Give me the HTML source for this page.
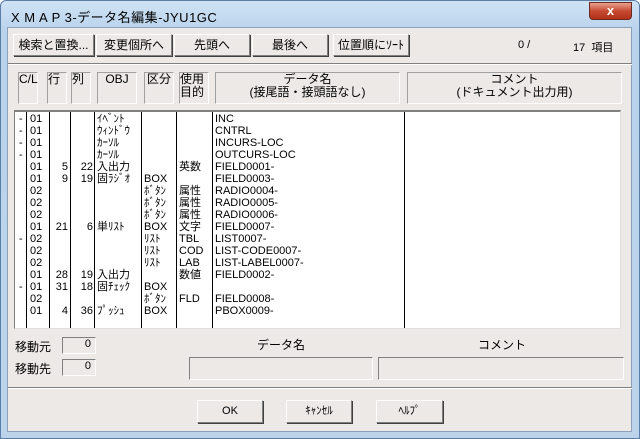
<!DOCTYPE html>
<html><head><meta charset="utf-8"><style>
*{margin:0;padding:0;box-sizing:border-box}
body{width:640px;height:439px;overflow:hidden;background:#fff;font-family:"Liberation Sans","Noto Sans CJK JP","WenQuanYi Zen Hei",sans-serif;font-size:12px;color:#000;position:relative}
.a{position:absolute;white-space:nowrap}
#win{position:absolute;left:0;top:0;width:640px;height:439px;background:linear-gradient(#cfe3f4,#b9d3ec 30px,#bcd4ea);border:1px solid #5a7ea8;border-radius:6px 6px 0 0}
#client{position:absolute;left:7px;top:27px;width:625px;height:405px;background:#ece9e6;border:1px solid #8aa0bb}
.btn{position:absolute;height:22px;background:#ece9e6;border:1px solid;border-color:#fff #808080 #808080 #fff;box-shadow:1px 1px 0 #404040;text-align:center;line-height:20px;font-size:12px}
.hdr{position:absolute;top:72px;height:32px;border:1px solid;border-color:#a0a0a0 #fff #fff #a0a0a0;text-align:center;line-height:13px;font-size:12px}
.sunk{position:absolute;border:1px solid;border-color:#808080 #fff #fff #808080;background:#ece9e6}
.row{position:absolute;left:0;height:12px;font-size:11px;line-height:12px;font-family:"Liberation Sans Narrow","Liberation Sans","Noto Sans CJK JP",sans-serif}
.row span{position:absolute}
.vl{position:absolute;top:0;width:1px;height:216px;background:#000}
</style></head><body>
<div id="win">
<div class="a" style="left:10px;top:6px;font-size:13px;letter-spacing:0.5px">X M A P 3-データ名編集-JYU1GC</div>
<div class="a" style="left:588px;top:1px;width:43px;height:18px;background:linear-gradient(#e8a090,#c84a32 50%,#b03018);border:1px solid #6a2a20;border-radius:0 0 4px 4px;color:#fff;text-align:center;font-weight:bold;line-height:16px;font-size:13px">x</div>
</div>
<div id="client"></div>
<div class="btn" style="left:13px;top:34px;width:81px">検索と置換...</div>
<div class="btn" style="left:96px;top:34px;width:76px">変更個所へ</div>
<div class="btn" style="left:174px;top:34px;width:76px">先頭へ</div>
<div class="btn" style="left:252px;top:34px;width:76px">最後へ</div>
<div class="btn" style="left:333px;top:34px;width:76px">位置順にｿｰﾄ</div>
<div class="a" style="left:518px;top:39px;font-size:11px">0 /</div>
<div class="a" style="left:573px;top:39px;font-size:11px">17 &nbsp;項目</div>
<div class="a" style="left:8px;top:63px;width:624px;height:2px;border-top:1px solid #808080;border-bottom:1px solid #fff"></div>
<div class="hdr" style="left:18px;width:20px;text-align:left">C/L</div>
<div class="hdr" style="left:47px;width:20px;text-align:left">行</div>
<div class="hdr" style="left:71px;width:20px;text-align:left">列</div>
<div class="hdr" style="left:97px;width:40px">OBJ</div>
<div class="hdr" style="left:144px;width:30px">区分</div>
<div class="hdr" style="left:179px;width:30px;text-align:left">使用<br>目的</div>
<div class="hdr" style="left:215px;width:185px">データ名<br>(接尾語・接頭語なし)</div>
<div class="hdr" style="left:407px;width:215px">コメント<br>(ドキュメント出力用)</div>
<div class="a" style="left:14px;top:110px;width:607px;height:219px;background:#fff;border:1px solid;border-color:#808080 #e0e0e0 #e0e0e0 #808080;border-top:2px solid #808080">
<div class="vl" style="left:11px"></div><div class="vl" style="left:34px"></div><div class="vl" style="left:55px"></div><div class="vl" style="left:79px"></div><div class="vl" style="left:126px"></div><div class="vl" style="left:161px"></div><div class="vl" style="left:197px"></div><div class="vl" style="left:389px"></div>
<div id="rows"></div>
</div>
<div class="a" style="left:15px;top:338px">移動元</div>
<div class="sunk" style="left:62px;top:337px;width:34px;height:17px;text-align:right;padding-right:4px;font-size:11px">0</div>
<div class="a" style="left:15px;top:360px">移動先</div>
<div class="sunk" style="left:62px;top:359px;width:34px;height:17px;text-align:right;padding-right:4px;font-size:11px">0</div>
<div class="a" style="left:257px;top:336px">データ名</div>
<div class="a" style="left:478px;top:336px">コメント</div>
<div class="sunk" style="left:189px;top:357px;width:184px;height:23px"></div>
<div class="sunk" style="left:378px;top:357px;width:246px;height:23px"></div>
<div class="a" style="left:8px;top:387px;width:624px;height:2px;border-top:1px solid #808080;border-bottom:1px solid #fff"></div>
<div class="btn" style="left:197px;top:400px;width:66px;height:23px;font-size:11px">OK</div>
<div class="btn" style="left:286px;top:400px;width:66px;height:23px;font-size:11px">ｷｬﾝｾﾙ</div>
<div class="btn" style="left:376px;top:400px;width:67px;height:23px;font-size:11px">ﾍﾙﾌﾟ</div>
<script>
var d=[["-","01","","","ｲﾍﾞﾝﾄ","","","INC"],["-","01","","","ｳｨﾝﾄﾞｳ","","","CNTRL"],["-","01","","","ｶｰｿﾙ","","","INCURS-LOC"],["-","01","","","ｶｰｿﾙ","","","OUTCURS-LOC"],["","01","5","22","入出力","","英数","FIELD0001-"],["","01","9","19","固ﾗｼﾞｵ","BOX","","FIELD0003-"],["","02","","","","ﾎﾞﾀﾝ","属性","RADIO0004-"],["","02","","","","ﾎﾞﾀﾝ","属性","RADIO0005-"],["","02","","","","ﾎﾞﾀﾝ","属性","RADIO0006-"],["","01","21","6","単ﾘｽﾄ","BOX","文字","FIELD0007-"],["-","02","","","","ﾘｽﾄ","TBL","LIST0007-"],["","02","","","","ﾘｽﾄ","COD","LIST-CODE0007-"],["","02","","","","ﾘｽﾄ","LAB","LIST-LABEL0007-"],["","01","28","19","入出力","","数値","FIELD0002-"],["-","01","31","18","固ﾁｪｯｸ","BOX","",""],["","02","","","","ﾎﾞﾀﾝ","FLD","FIELD0008-"],["","01","4","36","ﾌﾟｯｼｭ","BOX","","PBOX0009-"]];
var h="";d.forEach(function(r,i){h+='<div class="row" style="top:'+(i*12+1)+'px;width:600px">'+
'<span style="left:4px">'+r[0]+'</span><span style="left:15px">'+r[1]+'</span>'+
'<span style="right:'+(600-53)+'px">'+r[2]+'</span><span style="right:'+(600-78)+'px">'+r[3]+'</span>'+
'<span style="left:82px">'+r[4]+'</span><span style="left:129px">'+r[5]+'</span><span style="left:164px">'+r[6]+'</span><span style="left:200px">'+r[7]+'</span></div>'});
document.getElementById("rows").innerHTML=h;
</script>
</body></html>
